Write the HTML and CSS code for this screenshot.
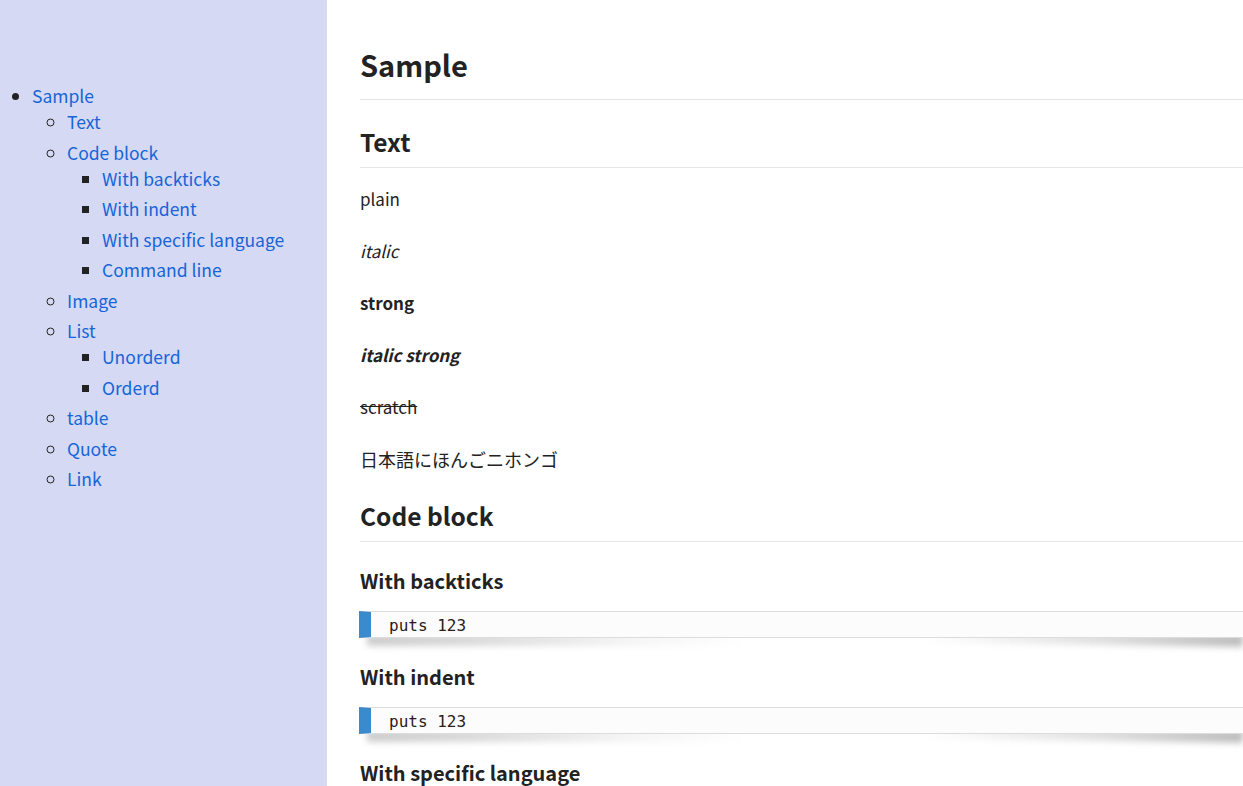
FILE: index.html
```html
<!DOCTYPE html>
<html lang="ja">
<head>
<meta charset="utf-8">
<title>Sample</title>
<link rel="stylesheet" href="styles.css">
</head>
<body>
<div class="layout">
  <nav class="sidebar">
    <ul class="toc">
      <li><a href="#sample">Sample</a>
        <ul>
          <li><a href="#text">Text</a></li>
          <li><a href="#code-block">Code block</a>
            <ul>
              <li><a href="#with-backticks">With backticks</a></li>
              <li><a href="#with-indent">With indent</a></li>
              <li><a href="#with-specific-language">With specific language</a></li>
              <li><a href="#command-line">Command line</a></li>
            </ul>
          </li>
          <li><a href="#image">Image</a></li>
          <li><a href="#list">List</a>
            <ul>
              <li><a href="#unorderd">Unorderd</a></li>
              <li><a href="#orderd">Orderd</a></li>
            </ul>
          </li>
          <li><a href="#table">table</a></li>
          <li><a href="#quote">Quote</a></li>
          <li><a href="#link">Link</a></li>
        </ul>
      </li>
    </ul>
  </nav>
  <main class="content">
    <h1 id="sample">Sample</h1>
    <h2 id="text">Text</h2>
    <p>plain</p>
    <p><em>italic</em></p>
    <p><strong>strong</strong></p>
    <p><em><strong>italic strong</strong></em></p>
    <p><del>scratch</del></p>
    <p class="ja">日本語にほんごニホンゴ</p>
    <h2 id="code-block">Code block</h2>
    <h3 id="with-backticks">With backticks</h3>
    <pre class="code">puts 123</pre>
    <h3 id="with-indent">With indent</h3>
    <pre class="code">puts 123</pre>
    <h3 id="with-specific-language">With specific language</h3>
    <pre class="code">puts 123</pre>
    <h3 id="command-line">Command line</h3>
    <pre class="code">$ echo 123</pre>
  </main>
</div>
</body>
</html>
```
FILE: styles.css
```css
html, body {
  margin: 0;
  padding: 0;
  overflow: hidden;
  background: #fff;
}

body {
  font-family: "Noto Sans CJK JP", "Noto Sans", sans-serif;
  color: #222;
}

.layout {
  display: flex;
  min-height: 100vh;
}

.sidebar {
  width: 327px;
  flex: 0 0 327px;
  background: #d6d9f3;
  padding-top: 83px;
  box-sizing: border-box;
}

.toc,
.toc ul {
  list-style: disc;
  margin: 0;
  padding-left: 35px;
}

.toc {
  padding-left: 32px;
}

.toc ul {
  list-style: circle;
}

.toc ul ul {
  list-style: square;
}

.toc li {
  font-size: 17.5px;
  line-height: 26px;
  margin-bottom: 4.5px;
  color: #222;
}

.toc a {
  color: #1565d8;
  text-decoration: none;
}

.content {
  flex: 1;
  min-width: 0;
  position: relative;
  z-index: 0;
  background: #fff;
  padding: 40px 0 0 33px;
}

h1, h2, h3 {
  font-weight: bold;
  color: #222;
}

h1 {
  font-size: 29px;
  line-height: 48px;
  margin: 0 0 23px;
  padding-bottom: 11px;
  border-bottom: 1px solid #e6e6e6;
}

h2 {
  font-size: 24.5px;
  line-height: 37px;
  margin: 23px 0 16px;
  padding-bottom: 7px;
  border-bottom: 1px solid #e6e6e6;
}

h3 {
  font-size: 20px;
  line-height: 32px;
  margin: 23px 0 14px;
}

p {
  font-size: 17px;
  line-height: 30px;
  margin: 0 0 22px;
}

p.ja {
  font-size: 18px;
}

del {
  text-decoration: line-through;
}

.code {
  position: relative;
  margin: 0 0 23px -1px;
  padding: 3px 18px 0;
  background: #fcfcfc;
  border-top: 1px solid #dcdcdc;
  border-bottom: 1px solid #dcdcdc;
  border-left: 12px solid #3a8bcd;
  font-family: "DejaVu Sans Mono", "Liberation Mono", monospace;
  font-size: 16px;
  line-height: 22px;
  color: #2a1a1a;
}

.code::before,
.code::after {
  content: "";
  position: absolute;
  z-index: -1;
  top: 100%;
  margin-top: -3px;
  filter: blur(3px);
}

.code::before {
  left: -4px;
  width: 380px;
  height: 12px;
  background: linear-gradient(to right, rgba(0, 0, 0, 0.2), rgba(0, 0, 0, 0.14) 30%, rgba(0, 0, 0, 0.04) 70%, rgba(0, 0, 0, 0));
}

.code::after {
  right: 0;
  width: 320px;
  height: 13px;
  background: linear-gradient(to left, rgba(0, 0, 0, 0.26), rgba(0, 0, 0, 0.12) 45%, rgba(0, 0, 0, 0));
  transform: rotate(0.8deg);
  transform-origin: right top;
}
```
